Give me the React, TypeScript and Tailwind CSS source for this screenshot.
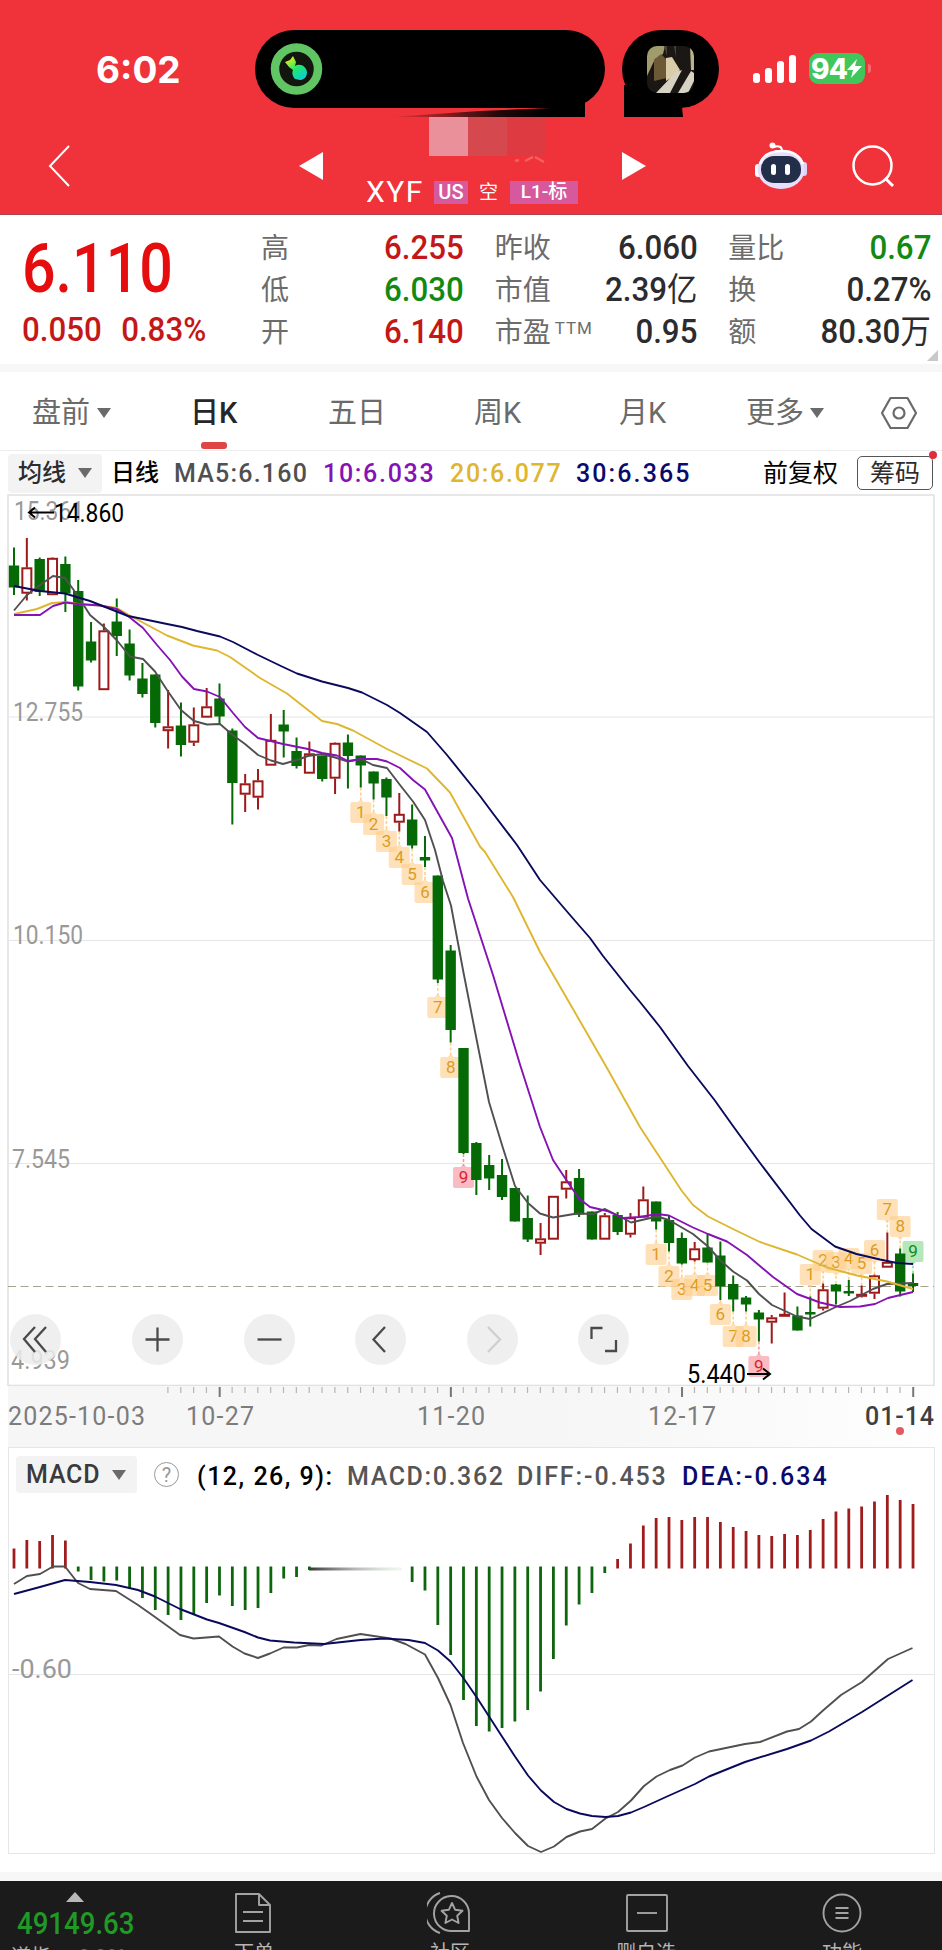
import type { ReactNode } from "react";

// [direction, high, body top, body bottom, low] in chart pixels
type Candle = ["g" | "r", number, number, number, number];

const candles: Candle[] = [
  ["g", 547.5, 565.5, 587.5, 595],
  ["r", 538, 567.5, 593.5, 600.5],
  ["g", 557.5, 559, 592, 596],
  ["r", 557.5, 558, 595, 595],
  ["g", 556.5, 564, 593.5, 612],
  ["g", 580, 591, 686.5, 690.5],
  ["g", 622, 641.5, 660.5, 662.5],
  ["r", 623.5, 630.5, 690, 690],
  ["g", 598.5, 621.5, 636, 656],
  ["g", 629.5, 643.5, 675.5, 680.5],
  ["g", 663, 678.5, 694, 697.5],
  ["g", 674.5, 674.5, 723, 727.5],
  ["r", 690, 726.5, 731, 748.5],
  ["g", 702.5, 725.5, 745, 756.5],
  ["r", 707.5, 724.5, 742.5, 746],
  ["r", 688, 706.5, 717.5, 717.5],
  ["g", 683.5, 698.5, 716.5, 725],
  ["g", 728.5, 730.5, 783, 824.5],
  ["r", 774, 783.5, 794.5, 812],
  ["r", 769, 780.5, 797.5, 809.5],
  ["r", 714, 740, 765.5, 765.5],
  ["g", 710, 724.5, 731.5, 757.5],
  ["g", 737.5, 751, 766, 768.5],
  ["r", 741.5, 753.5, 773.5, 773.5],
  ["g", 755.5, 755.5, 779, 781.5],
  ["r", 742.5, 743, 778.5, 794],
  ["g", 734.5, 742.5, 756, 788.5],
  ["g", 755.5, 755.5, 765.5, 787.5],
  ["g", 771.5, 771.5, 783.5, 799.5],
  ["g", 777.5, 779, 797.5, 816],
  ["r", 793, 814, 822.5, 831.5],
  ["g", 804.5, 819.5, 845.5, 848.5],
  ["g", 836, 857, 860.5, 867],
  ["g", 875.5, 875.5, 979.5, 983],
  ["g", 945, 950.5, 1030, 1042.5],
  ["g", 1048, 1048, 1153, 1154],
  ["g", 1142, 1143, 1180, 1195],
  ["g", 1155, 1165, 1178.5, 1190],
  ["g", 1159, 1175, 1197, 1200],
  ["g", 1188, 1188, 1221.5, 1221.5],
  ["g", 1195.5, 1218, 1239.5, 1242],
  ["r", 1223, 1238.5, 1243.5, 1255],
  ["r", 1196, 1196, 1239.5, 1239.5],
  ["r", 1170, 1181.5, 1189.5, 1198.5],
  ["g", 1169, 1178, 1214.5, 1217],
  ["g", 1211.5, 1211.5, 1239.5, 1239.5],
  ["r", 1213, 1215.5, 1239.5, 1239.5],
  ["g", 1212, 1215, 1232, 1235],
  ["r", 1213, 1217.5, 1234.5, 1237.5],
  ["r", 1186.5, 1199.5, 1217.5, 1217.5],
  ["g", 1201.5, 1201.5, 1221.5, 1229.5],
  ["g", 1215, 1220, 1243, 1251.5],
  ["g", 1232.5, 1238, 1263.5, 1264.5],
  ["r", 1242, 1248.5, 1260, 1261.5],
  ["g", 1233.5, 1247.5, 1262.5, 1262.5],
  ["g", 1241.5, 1255.5, 1286.5, 1300],
  ["g", 1275.5, 1284, 1299.5, 1311.5],
  ["g", 1296, 1297.5, 1304.5, 1311.5],
  ["g", 1310, 1312.5, 1319.5, 1341.5],
  ["r", 1315, 1317.5, 1322.5, 1343.5],
  ["r", 1292.5, 1314, 1316.5, 1316.5],
  ["g", 1306.5, 1315.5, 1330.5, 1330.5],
  ["g", 1296.5, 1312, 1314.5, 1326.5],
  ["r", 1283.5, 1289.5, 1308.5, 1310.5],
  ["g", 1284, 1284.5, 1291.5, 1304.5],
  ["g", 1280, 1291, 1293.5, 1296],
  ["r", 1285.5, 1294, 1296.5, 1297.5],
  ["r", 1274.5, 1275.5, 1293.5, 1299],
  ["r", 1232.5, 1262, 1267.5, 1267.5],
  ["g", 1248.5, 1253.5, 1291.5, 1296.5],
  ["g", 1273.5, 1283, 1286, 1292],
];

const averages = [
  {
    name: "MA5",
    color: "#505050",
    points:
      "14,610.5 27,595 40,585 53,576 65,578 78,596 90,615 103,626 117,640.5 130,656.5 143,659 155,671.5 168,691.5 181,710 194,721 207,724.5 220,724 232,734.5 245,744 258,755 271,760.5 283,764 297,760 308,756 322,754 335,757.5 348,761.5 361,759 373,765 387,768 400,785 413,801.5 425,820 435,850 443,881 451,905.5 463,970 477,1041.5 489,1102 502,1145 515,1186 528,1203 540,1213.5 553,1217.5 577,1213.5 593,1214 605,1209 617,1215 631,1222.5 657,1216.5 669,1220 693,1234 708,1246.5 720,1260 733,1271.5 747,1280.5 759,1294 772,1305 797,1316.5 810,1319 837,1306.5 850,1301 873,1289 887,1284 913,1283",
  },
  {
    name: "MA20",
    color: "#dfb62f",
    points:
      "14,614 37,609 52,603 67,602 78,604 100,605.5 117,608 128,614.5 140,621 167,635.5 193,645.5 217,650.5 230,657 260,678 287,693.5 322,721 337,724 353,730.5 387,749 427,768.5 450,792.5 480,846.5 485,852 513,897 540,952 573,1009 607,1068 640,1127 653,1147 681.5,1190.5 693,1205 708,1216.5 733,1229 760,1242 797,1254.5 827,1267.5 857,1275.5 887,1281.5 913,1289",
  },
  {
    name: "MA10",
    color: "#8512b4",
    points:
      "14,615 40,615 53,606 65,602.5 78,604 100,605.5 117,609 128,616 143,628 157,645 170,660 182,676.5 194,689 207,691.5 220,697 233,713 245,727 258,738 283,744 308,749 322,753 337,755.5 348,761 362,759 377,759 387,761.5 400,768 413,780 425,789.5 452,838 468,898.5 493,975 520,1064.5 540,1127 553,1160 567,1181 579,1198.5 590,1207 607,1211 623,1218 640,1217 657,1214 669,1215.5 693,1227.5 708,1234 727,1241.5 747,1255 773,1277 797,1294 820,1302.5 840,1307 860,1306.5 875,1304 888,1298 913,1292",
  },
  {
    name: "MA30",
    color: "#0a0a5c",
    points:
      "14,586 40,591 65,593.5 90,601 128,616 143,619 167,624 182,627 197,631 220,636.5 233,642 257,654.5 283,667 297,673.5 322,681.5 348,688 362,692.5 387,705 400,713 427,732 447,755 480,796 493,813.5 517,845 540,880 570,915 590,938 603,956 630,990 640,1002 660,1027 688,1066 714.5,1100 733,1126 760,1163 800,1215.5 811.5,1229 835,1246.5 856.5,1254 880,1259.5 897,1263 913,1264",
  },
];

// nine-turn markers: [label, candle index, centre y]
const turns: [number, number, number][] = [
  [1, 27, 812], [2, 28, 824], [3, 29, 841], [4, 30, 857], [5, 31, 874], [6, 32, 892],
  [7, 33, 1007], [8, 34, 1067], [9, 35, 1177],
  [1, 50, 1254], [2, 51, 1276], [3, 52, 1289], [4, 53, 1285], [5, 54, 1285], [6, 55, 1314],
  [7, 56, 1336], [8, 57, 1336], [9, 58, 1366],
  [1, 62, 1274], [2, 63, 1260], [3, 64, 1262], [4, 65, 1258], [5, 66, 1263], [6, 67, 1250],
  [7, 68, 1209], [8, 69, 1226], [9, 70, 1251],
];

const ZERO = 1567.5;
const macdBars = [
  1548.5, 1540, 1541, 1535, 1540.5, 1571.5, 1580, 1581.5, 1580.5, 1588, 1598, 1610, 1615, 1620, 1615,
  1603, 1595.5, 1606, 1610, 1608, 1593, 1578.5, 1577, 1570, 0, 0, 0, 0, 0, 0, 0, 1582, 1590.5, 1625, 1655,
  1700, 1726, 1731.5, 1728, 1721.5, 1710, 1691.5, 1659, 1625.5, 1604.5, 1593, 1573, 1559, 1543.5, 1525.5,
  1518, 1517, 1520, 1517, 1517, 1522, 1527, 1531, 1535, 1536, 1534, 1535, 1530, 1519, 1511.5, 1508.5,
  1506.5, 1501.5, 1495, 1500, 1504,
];

const diffLine =
  "14,1584 27,1576 40,1574 53,1566.5 65,1566.5 78,1583 90,1589 116,1591 138,1605 155,1617 180,1635 193.5,1638.5 219,1636.5 232.5,1646.5 244.5,1653.5 258,1658 270,1653.5 283.5,1647.5 297,1647.5 309,1645 321.5,1645.5 336.5,1639 360.5,1634 390.5,1638.5 405.5,1644 425,1654.5 438,1678 450.5,1705 463,1743 476.5,1776.5 489,1800 502,1818 515,1833 528,1846 541,1852 554,1846.5 566.5,1837 580,1831.5 592,1829 605.5,1818.5 618,1812 631,1800.5 644,1786 656.5,1776.5 670,1770 682.5,1765.5 695,1757.5 709,1751.5 745,1744 760,1742 787,1731.5 799,1729 811,1721.5 823,1710.5 841,1695 862,1682 888,1659 912.5,1648";
const deaLine =
  "14,1594 40,1587 65,1580 90,1582 116,1585 138,1590 155,1596.5 180,1609 207,1619.5 219,1623 244.5,1632 258,1637.5 270,1640.5 294,1642.5 324,1644 360.5,1640 384.5,1638.5 408.5,1640 425,1643 438,1650.5 450.5,1661.5 463,1677.5 476.5,1697 502,1736.5 515,1756.5 528,1775.5 541,1790.5 554,1802 566.5,1809 580,1813.5 592,1816 605.5,1817 618,1816 631,1812.5 644,1807 667,1796.5 695,1784 709,1776.5 745,1762 787,1749 811,1740.5 829,1731.5 862,1712 912.5,1680";

const cx = (i: number) => 14 + i * 12.843;

function StatusBar() {
  return (
    <div className="flex h-[117px] shrink-0 pl-[96px]">
      <div className="mt-[48px] w-[159px] font-['Inter'] text-[37px] leading-[44px] font-bold text-white">6:02</div>
      <svg className="mt-[30px] h-[87px] w-[464px]" viewBox="255 30 464 87">
        <defs>
          <linearGradient id="smear" x1="0" x2="1">
            <stop offset="0" stopColor="#000" stopOpacity="0" />
            <stop offset="0.55" stopColor="#000" stopOpacity="0.85" />
            <stop offset="0.8" stopColor="#000" />
          </linearGradient>
          <linearGradient id="call" x1="0" y1="0" x2="0.6" y2="1">
            <stop offset="0.2" stopColor="#c8f020" />
            <stop offset="0.6" stopColor="#20e86a" />
            <stop offset="1" stopColor="#10d0c8" />
          </linearGradient>
        </defs>
        <rect x="255" y="30" width="350" height="78" rx="39" />
        <path d="M390 117L480 111 550 108V88H585V117Z" fill="url(#smear)" />
        <rect x="622" y="30" width="97" height="78" rx="39" />
        <path d="M624 85H690V107H682L683 117H624Z" />
        <circle cx="296.5" cy="69" r="21.5" fill="#12160f" stroke="#62c564" strokeWidth="8.5" />
        <path d="M285 62l5-2 3-4 3 6-1 4c5-3 11 0 12 6 0 6-4 8-7 8l-5-1c-3-3-3-7-2-9l-4-3z" fill="url(#call)" />
        <clipPath id="thumb"><rect x="647" y="46" width="47" height="47" rx="10" /></clipPath>
        <g clipPath="url(#thumb)">
          <rect x="647" y="46" width="47" height="47" fill="#1a1714" />
          <path d="M647 46h18l-2 8-8 5-8 17z" fill="#a19c6c" />
          <path d="M654 60l7-6 6 6v18l-13 3z" fill="#6d5936" />
          <path d="M666 58l6-1 8 13-4 5-10 6z" fill="#d8cda8" />
          <path d="M656 93l20-21 6-2-12 23zM678 93l13-22 3 2v8l-6 12z" fill="#d8d2c4" />
          <path d="M664 46h3v10M674 46h2v12" fill="#4a4236" />
          <path d="M690 46h4v24h-3z" fill="#b9b48e" />
        </g>
      </svg>
      <div className="mt-[55px] ml-[34px] flex h-[28px] items-end gap-[5px]">
        <i className="h-[10px] w-[7px] rounded-[3px] bg-white" />
        <i className="h-[15px] w-[7px] rounded-[3px] bg-white" />
        <i className="h-[22px] w-[7px] rounded-[3px] bg-white" />
        <i className="h-[28px] w-[7px] rounded-[3px] bg-white" />
      </div>
      <div className="mt-[53px] ml-[13px] flex h-[31px] w-[56px] items-center rounded-[9px] bg-[#41c65b] pl-[2px] text-white">
        <span className="font-['Inter'] text-[28px] leading-none font-extrabold tracking-tight">94</span>
        <svg className="h-[19px] w-[15px] shrink-0" viewBox="0 0 15 19"><path d="M10 0L0 11h6l-2 8L15 7H8z" fill="#fff" /></svg>
      </div>
      <i className="mt-[64px] ml-[3px] h-[9px] w-[3px] rounded-r bg-[#f46a70]" />
    </div>
  );
}

function NavBar() {
  return (
    <div className="flex h-[98px] shrink-0 items-center border-b border-[#b0414c] pl-[48px]">
      <svg className="h-[42px] w-[23px]" viewBox="0 0 23 42">
        <path d="M21 1L2 21l19 20" fill="none" stroke="#fff" strokeWidth="2" />
      </svg>
      <svg className="ml-[228px] h-[28px] w-[24px]" viewBox="0 0 24 28"><path d="M0 14L24 0v28z" fill="#fff" /></svg>
      <div className="h-full w-[299px]">
        <div className="ml-[106px] flex">
          <i className="size-[39px] bg-[#e9909a]" />
          <i className="size-[39px] bg-[#d5484e]" />
          <i className="size-[39px] bg-[#de3a42]" />
        </div>
        <svg className="ml-[190px] h-[8px] w-[36px]" viewBox="0 0 36 8">
          <path d="M2 5l4-1M12 5l8-4M22 1l9 5" fill="none" stroke="#f2625f" strokeWidth="2.5" />
        </svg>
        <div className="mt-[15px] ml-[43px] flex h-[26px] items-center text-white">
          <span className="text-[30px] leading-none tracking-[1.5px]">XYF</span>
          <span className="ml-[10px] flex h-[23px] w-[34px] items-center justify-center bg-[#d5599c] text-[20px] font-medium">US</span>
          <span className="ml-[11px] text-[19px] leading-none">空</span>
          <span className="ml-[12px] flex h-[23px] w-[68px] items-center justify-center bg-[#d5599c] text-[19px] font-medium">L1-标</span>
        </div>
      </div>
      <svg className="h-[28px] w-[24px]" viewBox="0 0 24 28"><path d="M24 14L0 0v28z" fill="#fff" /></svg>
      <svg className="ml-[109px] h-[48px] w-[52px]" viewBox="0 0 52 48">
        <circle cx="17.500" cy="3.500" r="3" fill="#fff" />
        <path d="M19 5c5-2 8 0 8 4" fill="none" stroke="#fff" strokeWidth="2" />
        <rect x="0" y="22" width="6" height="13" rx="3" fill="#fff" />
        <rect x="46" y="20" width="6" height="14" rx="3" fill="#dcd4f4" />
        <ellipse cx="26" cy="27.500" rx="23.500" ry="19.500" fill="#e6defa" />
        <path d="M5 22C8 12 16 9 27 9s18 5 21 13" fill="none" stroke="#fff" strokeWidth="2.500" />
        <rect x="6" y="14" width="40" height="27" rx="13" fill="#232e49" />
        <rect x="16" y="22" width="5" height="11" rx="2.500" fill="#fff" />
        <rect x="30" y="22" width="5" height="11" rx="2.500" fill="#fff" />
      </svg>
      <svg className="ml-[45px] h-[42px] w-[43px]" viewBox="0 0 43 42">
        <circle cx="20.500" cy="20.500" r="19" fill="none" stroke="#fff" strokeWidth="2.500" />
        <path d="M33 33l8 8" stroke="#fff" strokeWidth="3" />
      </svg>
    </div>
  );
}

function Stat({ label, children, tone = "text-[#2c2c2e]" }: { label: ReactNode; children: ReactNode; tone?: string }) {
  return (
    <div className="flex h-[42px] items-center justify-between">
      <span className="flex pt-[6px] text-[28px] leading-none text-[#6c6c6c]">{label}</span>
      <span className={`origin-right scale-x-[0.92] pt-[2px] text-[34px] leading-[42px] font-medium whitespace-nowrap ${tone}`}>
        {children}
      </span>
    </div>
  );
}

function Quote() {
  return (
    <div className="relative flex h-[149px] shrink-0 bg-white pt-[10px] pl-[22px]">
      <div className="w-[239px] text-[#e50d0d]">
        <div className="mt-[8px] origin-left scale-x-[0.87] text-[68px] leading-[72px] font-medium">6.110</div>
        <div className="mt-[6px] flex origin-left scale-x-[0.92] gap-[21px] text-[34px] leading-[36px] font-medium text-[#c41717]">
          <span>0.050</span>
          <span>0.83%</span>
        </div>
      </div>
      <div className="grid h-[126px] w-[670px] grid-cols-3 gap-x-[31px]">
        <Stat label="高" tone="text-[#c41717]">6.255</Stat>
        <Stat label="昨收">6.060</Stat>
        <Stat label="量比" tone="text-[#128a12]">0.67</Stat>
        <Stat label="低" tone="text-[#128a12]">6.030</Stat>
        <Stat label="市值">2.39<span className="text-[33px] font-normal">亿</span></Stat>
        <Stat label="换">0.27%</Stat>
        <Stat label="开" tone="text-[#c41717]">6.140</Stat>
        <Stat label={<>市盈<sup className="top-0 ml-[4px] text-[17px] leading-[18px] tracking-[1px]">TTM</sup></>}>0.95</Stat>
        <Stat label="额">80.30<span className="text-[33px] font-normal">万</span></Stat>
      </div>
      <svg className="absolute right-[4px] bottom-[3px] size-[11px]" viewBox="0 0 11 11"><path d="M11 0v11H0z" fill="#c8c8c8" /></svg>
    </div>
  );
}

function Caret({ className = "" }: { className?: string }) {
  return (
    <svg className={`h-[10px] w-[14px] ${className}`} viewBox="0 0 14 10">
      <path d="M0 0h14L7 10z" fill="#6a6a6a" />
    </svg>
  );
}

function PeriodTabs() {
  return (
    <div className="flex h-[79px] shrink-0 items-center border-b border-[#ececec] bg-white pt-[3px] pl-[32px] text-[29px] leading-[40px] text-[#6a6a6a]">
      <div className="flex w-[158px] items-center">盘前<Caret className="ml-[7px]" /></div>
      <div className="relative w-[138px] font-medium text-[#262628]">
        日K
        <i className="absolute top-[49px] left-[11px] h-[7px] w-[26px] rounded-[3px] bg-[#df4545]" />
      </div>
      <div className="w-[146px]">五日</div>
      <div className="w-[145px]">周K</div>
      <div className="w-[127px]">月K</div>
      <div className="flex w-[134px] items-center">更多<Caret className="ml-[6px]" /></div>
      <svg className="h-[34px] w-[38px]" viewBox="0 0 38 34" fill="none" stroke="#6a6a6a" strokeWidth="2.2">
        <path d="M10.500 2h17L36 17l-8.500 15h-17L2 17z" strokeLinejoin="round" />
        <circle cx="19" cy="17" r="5.500" />
      </svg>
    </div>
  );
}

function MaBar() {
  return (
    <div className="flex h-[43px] shrink-0 items-center bg-white pt-px pl-[8px] text-[25px] leading-none font-medium">
      <div className="flex h-[39px] w-[94px] items-center rounded-[4px] bg-[#f3f3f3] pl-[10px] text-[24px] text-[#2c2c2e]">
        均线<Caret className="ml-[12px]" />
      </div>
      <span className="ml-[9px] w-[63px] text-[24px] text-black">日线</span>
      <span className="w-[149px] pt-px tracking-[1.2px] text-[#505050]">MA5:6.160</span>
      <span className="w-[127px] pt-px tracking-[1.7px] text-[#8512b4]">10:6.033</span>
      <span className="w-[126px] pt-px tracking-[1.7px] text-[#dfb62f]">20:6.077</span>
      <span className="w-[187px] pt-px tracking-[2.1px] text-[#0a0a6c]">30:6.365</span>
      <span className="w-[94px] pt-px font-normal text-black">前复权</span>
      <div className="relative flex h-[34px] w-[76px] items-center justify-center rounded-[5px] border-[1.5px] border-[#555] font-normal text-[#2c2c2e]">
        筹码
        <i className="absolute -top-[6px] -right-[5px] size-[8px] rounded-full bg-[#e02c3c]" />
      </div>
    </div>
  );
}

function turnColors(n: number, i: number) {
  if (n !== 9) return ["#fdcf8c", "#dd9c22"];
  return i === 70 ? ["#86d98e", "#118a1c"] : ["#f7929c", "#d8242e"];
}

function CandleChart() {
  return (
    <svg className="ml-[7px] h-[892px] w-[928px] shrink-0" viewBox="7 494 928 892" fontSize="25">
      <rect x="8" y="495" width="926" height="890.500" fill="#fff" stroke="#e2e2e2" strokeWidth="1.600" />
      <path d="M8 717H934M8 940.500H934M8 1163.500H934" stroke="#e6e6e6" strokeWidth="1.200" />
      <g fill="#999">
        <text x="14" y="520" textLength="70" lengthAdjust="spacingAndGlyphs">15.361</text>
        <text x="13" y="721" textLength="70" lengthAdjust="spacingAndGlyphs">12.755</text>
        <text x="13" y="944" textLength="70" lengthAdjust="spacingAndGlyphs">10.150</text>
        <text x="12" y="1168" textLength="58" lengthAdjust="spacingAndGlyphs">7.545</text>
        <text x="11" y="1369" textLength="59" lengthAdjust="spacingAndGlyphs">4.939</text>
      </g>
      <path d="M8 1286.500H934" stroke="#a3a394" strokeDasharray="8 4.500" />
      {turns.map(([n, i, y]) => {
        const [bg, fg] = turnColors(n, i);
        const above = i >= 62;
        const wick = above ? candles[i][1] : candles[i][4];
        return (
          <g key={i}>
            <path d={`M${cx(i)} ${wick}V${above ? y + 11 : y - 11}`} stroke={bg} strokeDasharray="3 2" strokeWidth="1.500" />
            <rect x={cx(i) - 10.500} y={y - 10} width="21" height="21" rx="2" fill={bg} opacity="0.62" />
            <path d={above ? `M${cx(i) - 3} ${y + 11}h6l-3 3z` : `M${cx(i) - 3} ${y - 10}h6l-3 -3z`} fill={bg} opacity="0.62" />
            <text x={cx(i)} y={y + 6} fontSize="17" textAnchor="middle" fill={fg}>{n}</text>
          </g>
        );
      })}
      {candles.map(([dir, high, top, bottom, low], i) =>
        dir === "g" ? (
          <g key={i} fill="#056a05">
            <rect x={cx(i) - 1} y={high} width="2" height={low - high} />
            <rect x={cx(i) - 5.200} y={top} width="10.400" height={bottom - top} />
          </g>
        ) : (
          <g key={i} fill="none" stroke="#9c1a1a" strokeWidth="2">
            <path d={`M${cx(i)} ${high}V${top}M${cx(i)} ${bottom}V${low}`} />
            <rect x={cx(i) - 4.500} y={top + 0.800} width="9" height={Math.max(bottom - top - 1.600, 1)} />
          </g>
        )
      )}
      {averages.map((ma) => (
        <polyline key={ma.name} points={ma.points} fill="none" stroke={ma.color} strokeWidth="1.900" strokeLinejoin="round" />
      ))}
      <g fill="none" stroke="#000" strokeWidth="2">
        <path d="M29 512.500H54M35 507.500l-6 5 6 5" />
        <path d="M747 1374H770M763 1368.500l7 5.500-7 5.500" />
      </g>
      <text x="54" y="522" textLength="70" lengthAdjust="spacingAndGlyphs">14.860</text>
      <text x="687" y="1383" textLength="59" lengthAdjust="spacingAndGlyphs">5.440</text>
    </svg>
  );
}

function RoundButton({ d, color = "#4a4a4a" }: { d: string; color?: string }) {
  return (
    <button className="size-[51px] rounded-full bg-[#ececec]/85">
      <svg className="size-full" viewBox="0 0 51 51">
        <path d={d} fill="none" stroke={color} strokeWidth="2.300" />
      </svg>
    </button>
  );
}

function ChartTools() {
  return (
    <div className="absolute top-[820px] left-[10px] flex">
      <RoundButton d="M25 13L14 25l11 13M36 13L25 25l11 13" />
      <div className="ml-[71px] flex gap-[60.5px]">
        <RoundButton d="M13.500 25.500h24M25.500 13.500v24" />
        <RoundButton d="M13.500 25.500h24" />
        <RoundButton d="M30 13L18.500 25.500 30 38" />
        <RoundButton d="M21 13l12 12.500L21 38" color="#cfcfcf" />
        <RoundButton d="M13.500 25V14h11M38 26v11H27" />
      </div>
    </div>
  );
}

function TimeAxis() {
  return (
    <svg className="ml-[7px] h-[61px] w-[928px] shrink-0" viewBox="7 1386 928 61" fontSize="25" fill="#7c7c7c">
      <defs>
        <linearGradient id="axis" x1="0" x2="1">
          <stop offset="0.6" stopColor="#f6f6f6" />
          <stop offset="1" stopColor="#fefefe" />
        </linearGradient>
      </defs>
      <rect x="8" y="1386" width="927" height="61" fill="url(#axis)" />
      {candles.map((_, i) => {
        if (i < 12) return null;
        const major = [16, 34, 52, 70].includes(i);
        return (
          <rect key={i} x={cx(i) - 0.800} y="1387" width={major ? 2 : 1.200} height={major ? 10 : 6} fill={major ? "#777" : "#b5b5b5"} />
        );
      })}
      <text x="8" y="1425" textLength="137">2025-10-03</text>
      <text x="186" y="1425" textLength="68">10-27</text>
      <text x="417" y="1425" textLength="68">11-20</text>
      <text x="648" y="1425" textLength="68">12-17</text>
      <text x="865" y="1425" textLength="69" fill="#3f3f41" fontWeight="500">01-14</text>
      <circle cx="900" cy="1431" r="4" fill="#e35a5e" />
    </svg>
  );
}

function MacdPanel() {
  return (
    <div className="relative ml-[8px] h-[407px] w-[927px] shrink-0 border border-[#e6e6e6] bg-white">
      <svg className="absolute top-0 left-0 h-[405px] w-[925px]" viewBox="9 1448 925 405" fontSize="25">
        <defs>
          <linearGradient id="zeroFade" x1="0" x2="1">
            <stop offset="0" stopColor="#333" />
            <stop offset="0.5" stopColor="#999" stopOpacity="0.7" />
            <stop offset="1" stopColor="#bcd8bc" stopOpacity="0.2" />
          </linearGradient>
        </defs>
        <path d="M8 1674.500H934" stroke="#e6e6e6" strokeWidth="1.200" />
        <text x="12" y="1678" textLength="60" lengthAdjust="spacingAndGlyphs" fill="#999">-0.60</text>
        <rect x="309" y="1567.500" width="93" height="3" fill="url(#zeroFade)" />
        {macdBars.map((y, i) =>
          y ? (
            <path key={i} d={`M${cx(i)} ${y < ZERO ? ZERO + 1 : ZERO - 1}V${y}`} stroke={y < ZERO ? "#a01c1c" : "#0d650d"} strokeWidth="2.800" />
          ) : null
        )}
        <g fill="none" strokeWidth="1.900" strokeLinejoin="round">
          <polyline points={diffLine} stroke="#505050" />
          <polyline points={deaLine} stroke="#0a0a5c" />
        </g>
      </svg>
      <div className="relative mt-[8px] flex h-[37px] items-center pl-[7px] text-[25px] leading-none font-medium whitespace-nowrap">
        <div className="flex h-[37px] w-[121px] items-center rounded-[4px] bg-[#f3f3f3] pl-[10px] tracking-[0.8px] text-[#3a3a3c]">
          MACD<Caret className="ml-[12px]" />
        </div>
        <div className="ml-[17px] flex size-[25px] items-center justify-center rounded-full border-[1.5px] border-[#999] text-[20px] font-normal text-[#999]">?</div>
        <span className="ml-[18px] w-[150px] pt-[3px] tracking-[1.5px] text-black">(12, 26, 9):</span>
        <span className="w-[170px] pt-[3px] tracking-[1.600px] text-[#555]">MACD:0.362</span>
        <span className="w-[165px] pt-[3px] tracking-[1.900px] text-[#555]">DIFF:-0.453</span>
        <span className="pt-[3px] tracking-[2.100px] text-[#0a0a6c]">DEA:-0.634</span>
      </div>
    </div>
  );
}

function NavItem({ label, children }: { label: string; children: ReactNode }) {
  return (
    <div className="flex w-[196px] flex-col items-center">
      <svg className="mt-[10px] h-[44px] w-[46px] shrink-0" viewBox="0 0 46 44" fill="none" stroke="#a3a3a3" strokeWidth="1.900" strokeLinejoin="round">
        {children}
      </svg>
      <span className="mt-[8px] text-[20px] leading-[20px] whitespace-nowrap text-[#b5b5b5]">{label}</span>
    </div>
  );
}

function BottomBar() {
  return (
    <div className="flex h-[69px] shrink-0 overflow-hidden bg-[#1b1b1b]">
      <div className="w-[156px] shrink-0">
        <svg className="mt-[11px] ml-[66px] h-[10px] w-[18px]" viewBox="0 0 18 10"><path d="M9 0l9 10H0z" fill="#b8b8b8" /></svg>
        <div className="mt-[6px] ml-[17px] origin-left scale-x-[0.89] text-[31px] leading-[31px] font-medium text-[#1f9a25]">49149.63</div>
        <div className="mt-[6px] ml-[11px] flex gap-[22px] text-[20px] leading-[24px] text-[#b5b5b5]">
          道指<span className="text-[#1f9a25]">-0.09%</span>
        </div>
      </div>
      <NavItem label="下单">
        <path d="M5 3h23l11 11v27H5zM28 3v11h11M12 21h20M12 30h20" />
      </NavItem>
      <NavItem label="社区">
        <path d="M42 40H26a17.500 17.500 0 1 1 16-17.500zM13 2a21 21 0 0 0 0 40" />
        <path d="M25 12l3.200 6.800 7.300 1-5.300 5 1.400 7.200-6.600-3.500-6.600 3.500 1.400-7.200-5.300-5 7.300-1z" />
      </NavItem>
      <NavItem label="删自选">
        <rect x="4" y="4" width="40" height="36" rx="1" />
        <path d="M14 22h20" />
      </NavItem>
      <NavItem label="功能">
        <circle cx="23" cy="22" r="18.500" />
        <path d="M16.500 17h13M16.500 22h13M16.500 27h13" />
      </NavItem>
    </div>
  );
}

export default function App() {
  return (
    <main className="flex h-[1950px] w-[942px] flex-col overflow-hidden bg-white font-['Roboto','Noto_Sans_CJK_SC',sans-serif]">
      <header className="bg-[#f0323a]">
        <StatusBar />
        <NavBar />
      </header>
      <Quote />
      <div className="h-[8px] shrink-0 bg-[#f7f7f7]" />
      <PeriodTabs />
      <MaBar />
      <section className="relative flex flex-col">
        <CandleChart />
        <ChartTools />
      </section>
      <TimeAxis />
      <MacdPanel />
      <div className="mt-[18px] h-[9px] shrink-0 bg-[#f7f7f7]" />
      <BottomBar />
    </main>
  );
}
